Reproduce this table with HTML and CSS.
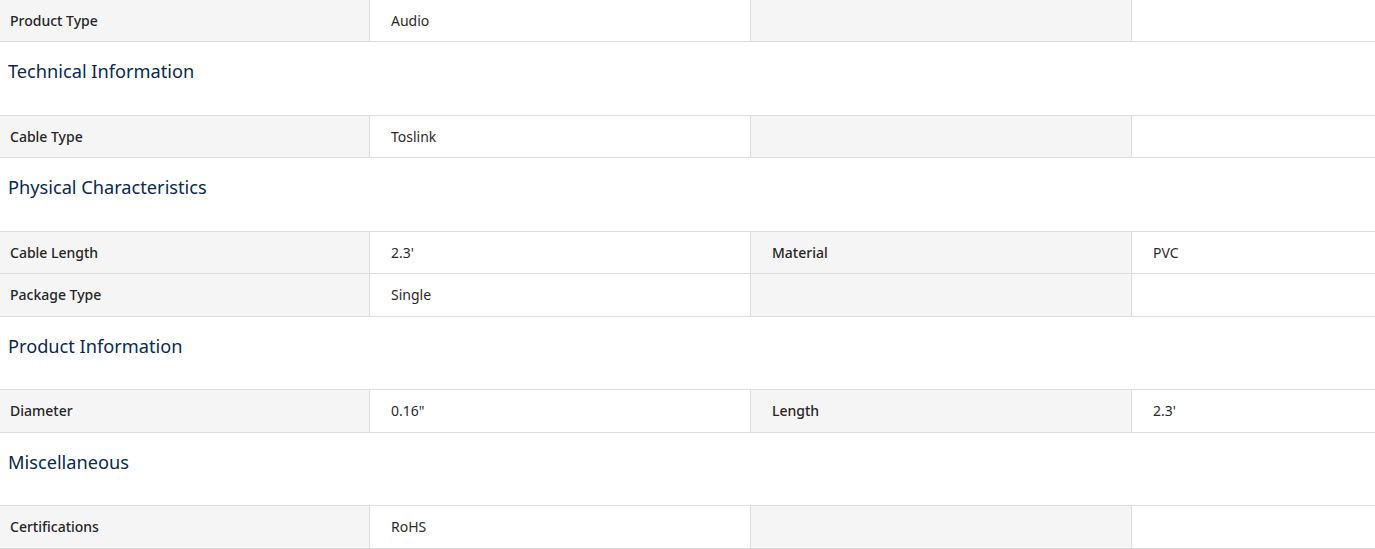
FILE: index.html
```html
<!DOCTYPE html>
<html lang="en">
<head>
<meta charset="utf-8">
<title>Specifications</title>
<link rel="stylesheet" href="styles.css">
</head>
<body>
<div class="specs">
  <div class="row first">
    <div class="cell label">Product Type</div>
    <div class="cell value">Audio</div>
    <div class="cell label"></div>
    <div class="cell value"></div>
  </div>
  <h3 class="group">Technical Information</h3>
  <div class="row">
    <div class="cell label">Cable Type</div>
    <div class="cell value">Toslink</div>
    <div class="cell label"></div>
    <div class="cell value"></div>
  </div>
  <h3 class="group">Physical Characteristics</h3>
  <div class="row">
    <div class="cell label">Cable Length</div>
    <div class="cell value">2.3'</div>
    <div class="cell label">Material</div>
    <div class="cell value">PVC</div>
  </div>
  <div class="row">
    <div class="cell label">Package Type</div>
    <div class="cell value">Single</div>
    <div class="cell label"></div>
    <div class="cell value"></div>
  </div>
  <h3 class="group">Product Information</h3>
  <div class="row">
    <div class="cell label">Diameter</div>
    <div class="cell value">0.16"</div>
    <div class="cell label">Length</div>
    <div class="cell value">2.3'</div>
  </div>
  <h3 class="group">Miscellaneous</h3>
  <div class="row">
    <div class="cell label">Certifications</div>
    <div class="cell value">RoHS</div>
    <div class="cell label"></div>
    <div class="cell value"></div>
  </div>
</div>
</body>
</html>
```

FILE: styles.css
```css
* { box-sizing: border-box; }
html, body { margin: 0; padding: 0; background: #fff; }
body {
  font-family: "Noto Sans", "Open Sans", sans-serif;
  color: #222;
  overflow: hidden;
}
.specs { display: flex; flex-direction: column; }
.row {
  display: grid;
  grid-template-columns: 370px 381px 381px 1fr;
  height: 42.4px;
  border-bottom: 1px solid #dddddd;
}
.row.first { height: 42.2px; }
.cell {
  display: flex;
  align-items: center;
  padding: 1px 21px 0;
  font-size: 14px;
  line-height: 18px;
  color: #2b2b2b;
}
.cell.label {
  background: #f5f5f5;
  border-right: 1px solid #dddddd;
  font-weight: 500;
  color: #262626;
}
.cell.value { border-right: 1px solid #dddddd; }
.row .cell:first-child { padding-left: 10px; }
.row .cell:last-child { border-right: none; }
.group {
  margin: 0;
  height: 73.6px;
  padding: 17px 8px 0;
  font-size: 18.2px;
  line-height: 24px;
  font-weight: 400;
  color: #092a52;
  border-bottom: 1px solid #dddddd;
}
```
